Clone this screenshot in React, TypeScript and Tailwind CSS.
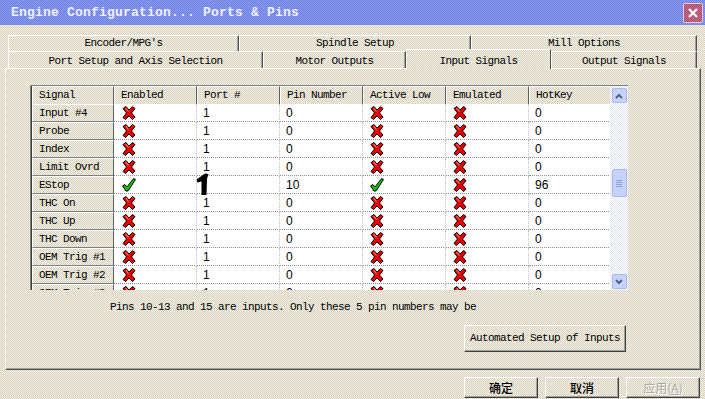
import React from "react";

type Row = {
  name: string;
  enabled: boolean;
  port: string;
  pin: string;
  activeLow: boolean;
  emulated: boolean;
  hotkey: string;
};

const rows: Row[] = [
  { name: "Input #4", enabled: false, port: "1", pin: "0", activeLow: false, emulated: false, hotkey: "0" },
  { name: "Probe", enabled: false, port: "1", pin: "0", activeLow: false, emulated: false, hotkey: "0" },
  { name: "Index", enabled: false, port: "1", pin: "0", activeLow: false, emulated: false, hotkey: "0" },
  { name: "Limit Ovrd", enabled: false, port: "1", pin: "0", activeLow: false, emulated: false, hotkey: "0" },
  { name: "EStop", enabled: true, port: "", pin: "10", activeLow: true, emulated: false, hotkey: "96" },
  { name: "THC On", enabled: false, port: "1", pin: "0", activeLow: false, emulated: false, hotkey: "0" },
  { name: "THC Up", enabled: false, port: "1", pin: "0", activeLow: false, emulated: false, hotkey: "0" },
  { name: "THC Down", enabled: false, port: "1", pin: "0", activeLow: false, emulated: false, hotkey: "0" },
  { name: "OEM Trig #1", enabled: false, port: "1", pin: "0", activeLow: false, emulated: false, hotkey: "0" },
  { name: "OEM Trig #2", enabled: false, port: "1", pin: "0", activeLow: false, emulated: false, hotkey: "0" },
  { name: "OEM Trig #3", enabled: false, port: "1", pin: "0", activeLow: false, emulated: false, hotkey: "0" },
];

const headers = ["Signal", "Enabled", "Port #", "Pin Number", "Active Low", "Emulated", "HotKey"];

const grid = "grid grid-cols-[82px_83px_83px_83px_83px_83px_82px]";

function RedX() {
  return (
    <svg width="14" height="14" viewBox="0 0 14 14">
      <polygon
        points="1,2.5 4,0.5 7,4 10.5,0.5 13,2.5 9.5,7 13,11 10.5,13.5 7,10 3.5,13.5 1,11.5 4.5,7"
        fill="#e80000"
        stroke="#000"
        strokeWidth="1"
        strokeLinejoin="round"
      />
      <polygon points="4,1.5 7,5 6,6 3,2.5" fill="#ff6060" />
    </svg>
  );
}

function Check() {
  return (
    <svg width="14" height="14" viewBox="0 0 14 14">
      <polygon
        points="0.5,8 3,6.5 5,9 11.5,0.5 13.5,1.5 6,13 4,13"
        fill="#10c010"
        stroke="#000"
        strokeWidth="1"
        strokeLinejoin="round"
      />
    </svg>
  );
}

function Chevron({ down }: { down?: boolean }) {
  return (
    <svg width="8" height="6" viewBox="0 0 8 6">
      <polyline
        points={down ? "1,1 4,4 7,1" : "1,5 4,2 7,5"}
        fill="none"
        stroke="#4d6185"
        strokeWidth="2"
      />
    </svg>
  );
}

function Tab({ label, className }: { label: string; className: string }) {
  return (
    <div
      className={`flex items-center justify-center border-l border-t border-r border-l-white border-t-white border-r-[#505050] shadow-[inset_-1px_0_0_#a0a0a0] ${className}`}
    >
      {label}
    </div>
  );
}

function Cell({ children, className = "" }: { children?: React.ReactNode; className?: string }) {
  return (
    <div
      className={`flex items-center h-[18px] bg-white border-b border-dotted border-b-[#909090] border-r border-r-[#c0c0c0] ${className}`}
    >
      {children}
    </div>
  );
}

function WinButton({ children, className = "" }: { children: React.ReactNode; className?: string }) {
  return (
    <div
      className={`flex items-center justify-center border border-t-white border-l-white border-r-[#404040] border-b-[#404040] shadow-[inset_-1px_-1px_0_#a0a0a0] ${className}`}
    >
      {children}
    </div>
  );
}

export default function App() {
  return (
    <div className="w-[705px] h-[399px] overflow-hidden relative bg-[conic-gradient(#f2f0e6_25%,#d8d2bf_0_50%,#f2f0e6_0_75%,#d8d2bf_0)] bg-[length:2px_2px] font-['Liberation_Mono',monospace] text-[11px] tracking-[-0.6px] text-black">
      {/* title bar */}
      <div className="h-[25px] flex items-center justify-between pl-[11px] pr-[2px] bg-[conic-gradient(#8c9cf0_25%,#6d80e0_0_50%,#8c9cf0_0_75%,#6d80e0_0)] bg-[length:2px_2px]">
        <span className="text-[13px] font-bold tracking-[0.2px] text-[#f0f0ff]">
          Engine Configuration... Ports &amp; Pins
        </span>
        <div className="w-[20px] h-[20px] flex items-center justify-center rounded-[2px] border border-[#e8c8d8] bg-[conic-gradient(#c86a88_25%,#a8506c_0_50%,#c86a88_0_75%,#a8506c_0)] bg-[length:2px_2px]">
          <svg width="12" height="12" viewBox="0 0 12 12">
            <path d="M2 2 L10 10 M10 2 L2 10" stroke="#fff" strokeWidth="2.2" />
          </svg>
        </div>
      </div>

      {/* tabs */}
      <div className="ml-[8px] mt-[10px] w-[691px]">
        <div className="flex h-[16px]">
          <Tab label="Encoder/MPG's" className="w-[231px]" />
          <Tab label="Spindle Setup" className="w-[232px]" />
          <Tab label="Mill Options" className="w-[226px]" />
        </div>
        <div className="flex h-[17px] items-end">
          <Tab label="Port Setup and Axis Selection" className="w-[255px] h-[17px] pt-[2px]" />
          <Tab label="Motor Outputs" className="w-[143px] h-[17px] pt-[2px]" />
          <div className="relative z-10 w-[145px] h-[20px] -mb-[1px] flex items-start justify-center pt-[3px] border-l border-t border-r border-l-white border-t-white border-r-[#505050] bg-[conic-gradient(#f2f0e6_25%,#d8d2bf_0_50%,#f2f0e6_0_75%,#d8d2bf_0)] bg-[length:2px_2px]">
            Input Signals
          </div>
          <Tab label="Output Signals" className="w-[146px] h-[17px] pt-[2px]" />
        </div>
      </div>

      {/* panel */}
      <div className="ml-[5px] w-[696px] h-[302px] border border-l-white border-t-white border-r-[#505050] border-b-[#505050] shadow-[inset_-1px_-1px_0_#a0a0a0]">
        {/* table */}
        <div className="ml-[24px] mt-[16px] w-[598px] h-[205px] flex border-l border-t border-[#808080] shadow-[inset_1px_1px_0_#404040] overflow-hidden">
          <div className="w-[579px] pl-[1px]">
            <div className={`${grid} h-[18px]`}>
              {headers.map((h) => (
                <div
                  key={h}
                  className="flex items-center pl-[6px] border-t border-l border-t-white border-l-white border-r border-b border-r-[#606060] border-b-[#606060]"
                >
                  {h}
                </div>
              ))}
            </div>
            {rows.map((r) => (
              <div key={r.name} className={grid}>
                <div className="flex items-center h-[18px] pl-[6px] border-t border-l border-t-white border-l-white border-r border-b border-r-[#606060] border-b-[#808080]">
                  {r.name}
                </div>
                <Cell className="pl-[8px]">{r.enabled ? <Check /> : <RedX />}</Cell>
                <Cell className="pl-[6px] font-['Liberation_Sans',sans-serif] text-[12px] tracking-[0px]">{r.port}</Cell>
                <Cell className="pl-[6px] font-['Liberation_Sans',sans-serif] text-[12px] tracking-[0px]">{r.pin}</Cell>
                <Cell className="pl-[7px]">{r.activeLow ? <Check /> : <RedX />}</Cell>
                <Cell className="pl-[7px]">{r.emulated ? <Check /> : <RedX />}</Cell>
                <Cell className="pl-[6px] font-['Liberation_Sans',sans-serif] text-[12px] tracking-[0px]">{r.hotkey}</Cell>
              </div>
            ))}
          </div>

          {/* scrollbar */}
          <div className="w-[18px] h-full flex flex-col items-center pt-[2px] pb-[1px] bg-[conic-gradient(#ffffff_25%,#dfe3ee_0_50%,#ffffff_0_75%,#dfe3ee_0)] bg-[length:2px_2px]">
            <div className="w-[15px] h-[15px] flex items-center justify-center rounded-[2px] border border-[#a9b9ee] bg-[#c6d2fa]">
              <Chevron />
            </div>
            <div className="h-[66px]" />
            <div className="w-[15px] h-[28px] flex flex-col items-center justify-center gap-[1px] rounded-[2px] border border-[#a9b9ee] bg-[#c6d2fa]">
              <div className="w-[6px] h-[1px] bg-[#8ea0d8]" />
              <div className="w-[6px] h-[1px] bg-[#8ea0d8]" />
              <div className="w-[6px] h-[1px] bg-[#8ea0d8]" />
              <div className="w-[6px] h-[1px] bg-[#8ea0d8]" />
            </div>
            <div className="flex-1" />
            <div className="w-[15px] h-[15px] flex items-center justify-center rounded-[2px] border border-[#a9b9ee] bg-[#c6d2fa]">
              <Chevron down />
            </div>
          </div>
        </div>

        <div className="ml-[104px] mt-[10px] h-[14px] leading-[14px]">
          Pins 10-13 and 15 are inputs. Only these 5 pin numbers may be
        </div>

        <WinButton className="ml-[458px] mt-[11px] w-[162px] h-[27px]">
          Automated Setup of Inputs
        </WinButton>
      </div>

      {/* dialog buttons */}
      <div className="flex gap-[7px] ml-[464px] mt-[7px] font-['Noto_Sans_CJK_SC',sans-serif] text-[12px] font-medium tracking-[0px]">
        <WinButton className="w-[74px] h-[21px]">确定</WinButton>
        <WinButton className="w-[74px] h-[21px]">取消</WinButton>
        <WinButton className="w-[74px] h-[21px] font-normal text-[#a8a8a0] [text-shadow:1px_1px_0_#fff]">
          应用(<span className="underline">A</span>)
        </WinButton>
      </div>

      {/* mouse cursor */}
      <svg className="absolute left-[196px] top-[173px]" width="14" height="23" viewBox="0 0 14 23">
        <path d="M0.5 6.5 L9 0.5 L12.5 1 L11 6 L10.5 22 L5.5 22 L5.5 8.5 L1.5 9.5 Z" fill="#000" />
      </svg>
    </div>
  );
}
